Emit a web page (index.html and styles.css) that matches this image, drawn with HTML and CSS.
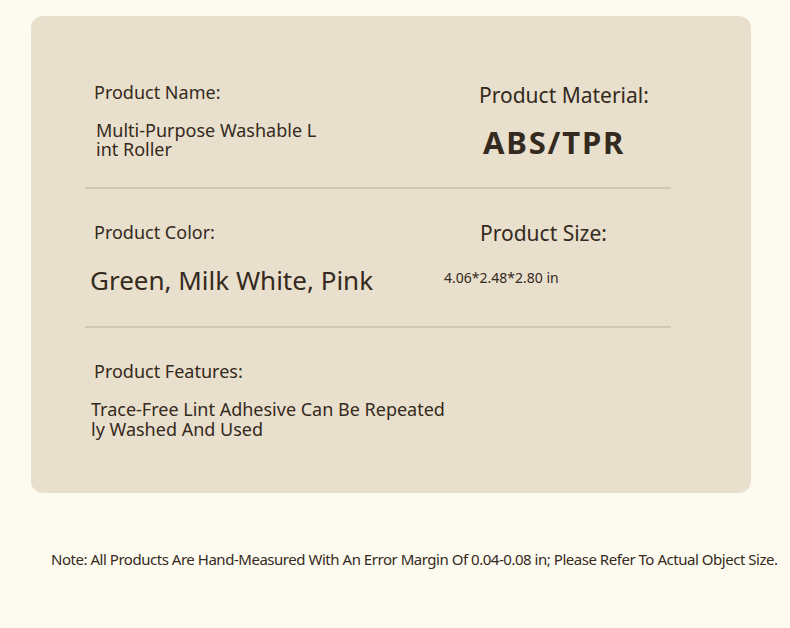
FILE: index.html
```html
<!DOCTYPE html>
<html>
<head>
<meta charset="utf-8">
<link rel="stylesheet" href="styles.css">
</head>
<body>
<div class="page">
  <div class="card">
    <div class="row row-1">
      <div class="col col-left">
        <div class="label">Product Name:</div>
        <div class="value-name">Multi-Purpose Washable L<br>int Roller</div>
      </div>
      <div class="col col-right">
        <div class="label-lg material-label">Product Material:</div>
        <div class="value-material">ABS/TPR</div>
      </div>
    </div>
    <div class="divider"></div>
    <div class="row row-2">
      <div class="col col-left">
        <div class="label">Product Color:</div>
        <div class="value-color">Green, Milk White, Pink</div>
      </div>
      <div class="col col-right">
        <div class="label-lg size-label">Product Size:</div>
        <div class="value-size">4.06*2.48*2.80 in</div>
      </div>
    </div>
    <div class="divider"></div>
    <div class="row row-3">
      <div class="col col-wide">
        <div class="label">Product Features:</div>
        <div class="value-features">Trace-Free Lint Adhesive Can Be Repeated<br>ly Washed And Used</div>
      </div>
    </div>
  </div>
  <p class="note">Note: All Products Are Hand-Measured With An Error Margin Of 0.04-0.08 in; Please Refer To Actual Object Size.</p>
</div>
</body>
</html>
```

FILE: styles.css
```css
* { box-sizing: border-box; }
html, body {
  margin: 0;
  padding: 0;
  background: #fdfaf0;
}
body {
  font-family: "Noto Sans", "Open Sans", sans-serif;
  color: #342a20;
  width: 790px;
  height: 628px;
  overflow: hidden;
}
.page {
  padding: 16px 0 0 31px;
}
.card {
  width: 720px;
  height: 477px;
  background: #e9dfcd;
  border-radius: 12px;
  padding-top: 64px;
}
.row {
  display: flex;
}
.col-left {
  width: 382px;
}
.col-right {
  width: 260px;
}
.col-wide {
  width: 600px;
}
.label {
  font-size: 18px;
  line-height: 24px;
  padding-left: 63px;
}
.label-lg {
  font-size: 21px;
  line-height: 28px;
}
.value-name {
  font-size: 18px;
  line-height: 19px;
  padding-left: 65px;
  margin-top: 17px;
  white-space: nowrap;
}
.material-label {
  padding-left: 66px;
  margin-top: 1px;
}
.value-material {
  font-size: 31px;
  font-weight: 700;
  line-height: 40px;
  padding-left: 70px;
  margin-top: 13px;
  letter-spacing: 1.8px;
}
.divider {
  width: 586px;
  height: 2px;
  margin-left: 54px;
  background: #d2c6b4;
}
.row-1 {
  height: 107px;
}
.row-2 {
  padding-top: 31px;
  height: 137px;
}
.row-3 {
  padding-top: 31px;
}
.value-color {
  font-size: 26px;
  line-height: 32px;
  padding-left: 59px;
  margin-top: 20px;
  white-space: nowrap;
}
.size-label {
  padding-left: 36px;
  margin-top: -1px;
}
.value-size {
  font-size: 14px;
  line-height: 18px;
  margin-top: 22px;
  white-space: nowrap;
}
.row-2 .col-right {
  padding-left: 31px;
}
.value-features {
  font-size: 18px;
  line-height: 20px;
  padding-left: 60px;
  margin-top: 16px;
  white-space: nowrap;
}
.note {
  margin: 56px 0 0 20px;
  font-size: 15px;
  line-height: 20px;
  letter-spacing: -0.47px;
  white-space: nowrap;
}
```
